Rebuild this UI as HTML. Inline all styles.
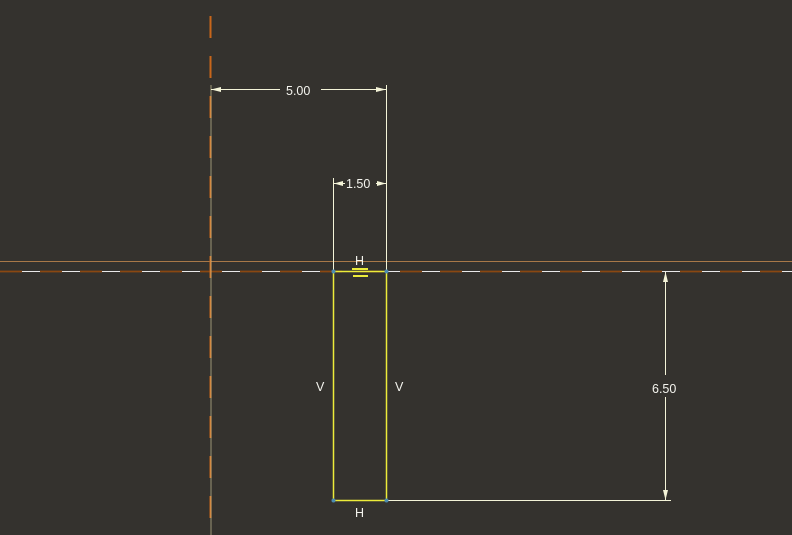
<!DOCTYPE html>
<html><head><meta charset="utf-8"><style>
html,body{margin:0;padding:0;background:#34322e;width:792px;height:535px;overflow:hidden}
text{font-family:"Liberation Sans",sans-serif;font-size:12.5px;fill:#f4f4ee}
</style></head><body>
<svg width="792" height="535" xmlns="http://www.w3.org/2000/svg">
<rect width="792" height="535" fill="#34322e"/>
<line x1="0" y1="261.5" x2="792" y2="261.5" stroke="#a87848" stroke-width="1"/>
<line x1="0" y1="271.5" x2="792" y2="271.5" stroke="#e8e8e8" stroke-width="1"/>
<line x1="0" y1="271.5" x2="792" y2="271.5" stroke="#8a4812" stroke-width="1.8" stroke-dasharray="22 18"/>
<line x1="210.5" y1="0" x2="210.5" y2="535" stroke="#c8661a" stroke-width="2" stroke-dasharray="22 18" stroke-dashoffset="-16"/>
<line x1="211" y1="85" x2="211" y2="535" stroke="#f0e8b0" stroke-width="1" opacity="0.55"/>
<line x1="386.5" y1="85" x2="386.5" y2="271" stroke="#f4f4d8" stroke-width="1"/>
<line x1="333.5" y1="178" x2="333.5" y2="271" stroke="#f4f4d8" stroke-width="1"/>
<line x1="211" y1="89.5" x2="280" y2="89.5" stroke="#f4f4d8"/>
<line x1="321" y1="89.5" x2="386" y2="89.5" stroke="#f4f4d8"/>
<path d="M211 89.5 L221 87 L221 92Z M386 89.5 L376 87 L376 92Z" fill="#f4f4d8"/>
<text x="286" y="95">5.00</text>
<path d="M334 183.5 L343 181 L343 186Z M386 183.5 L377 181 L377 186Z" fill="#f4f4d8"/>
<line x1="334" y1="183.5" x2="345" y2="183.5" stroke="#f4f4d8"/>
<line x1="376" y1="183.5" x2="386" y2="183.5" stroke="#f4f4d8"/>
<text x="346" y="188">1.50</text>
<rect x="333.5" y="271.5" width="53" height="229" fill="none" stroke="#ecec3a" stroke-width="1.5"/>
<line x1="387" y1="500.5" x2="671" y2="500.5" stroke="#f4f4d8"/>
<line x1="665.5" y1="272" x2="665.5" y2="375" stroke="#f4f4d8"/>
<line x1="665.5" y1="397" x2="665.5" y2="500" stroke="#f4f4d8"/>
<path d="M665.5 272 L663 282 L668 282Z M665.5 500 L663 490 L668 490Z" fill="#f4f4d8"/>
<text x="652" y="393">6.50</text>
<circle cx="333.5" cy="271.5" r="2" fill="#4a8ab0"/>
<circle cx="386.5" cy="271.5" r="2" fill="#4a8ab0"/>
<circle cx="333.5" cy="500.5" r="2" fill="#4a8ab0"/>
<circle cx="386.5" cy="500.5" r="2" fill="#4a8ab0"/>
<text x="355" y="265">H</text>
<rect x="352" y="268" width="16" height="2" fill="#ecec3a"/>
<rect x="353" y="275" width="15" height="2" fill="#ecec3a"/>
<text x="316" y="391">V</text>
<text x="395" y="391">V</text>
<text x="355" y="517">H</text>
</svg>
</body></html>
